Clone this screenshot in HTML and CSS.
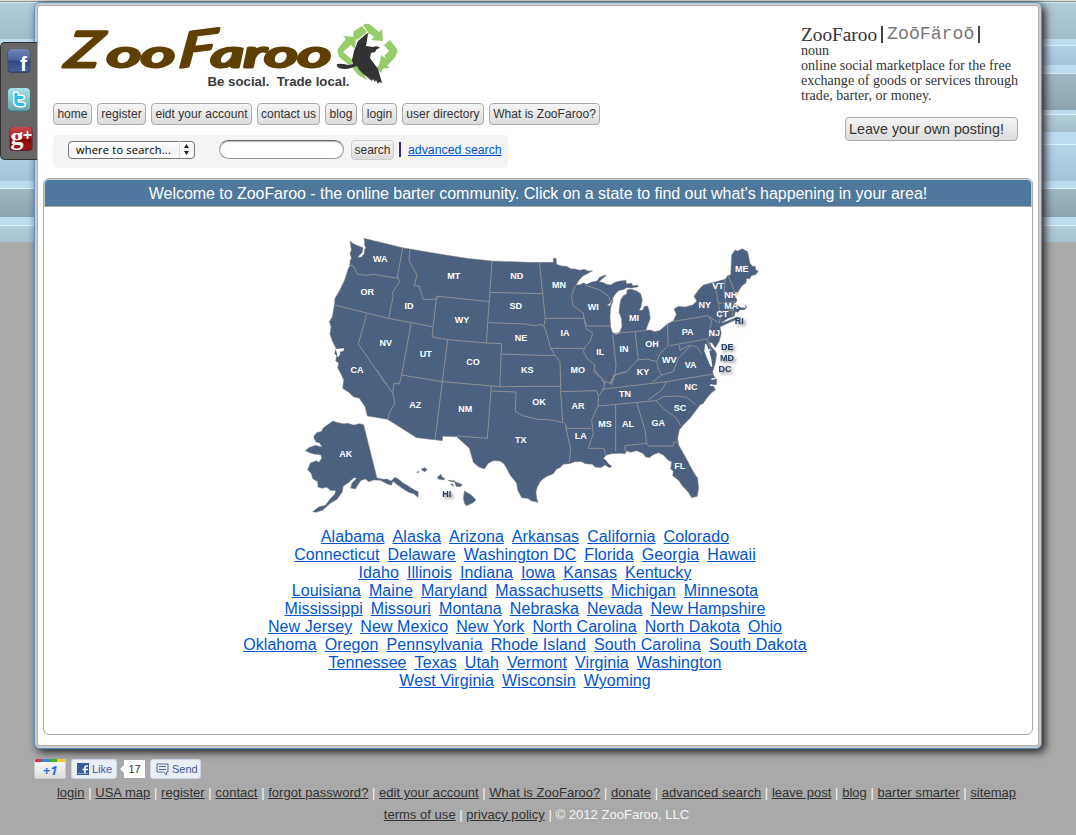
FILE: index.html
```html
<!DOCTYPE html>
<html lang="en">
<head>
<meta charset="utf-8">
<title>ZooFaroo</title>
<link rel="stylesheet" href="styles.css">
</head>
<body>
<aside class="share">
  <svg class="share-icon" viewBox="0 0 24 26"><defs><linearGradient id="fb" x2="0" y2="1"><stop offset="0" stop-color="#7786b4"/><stop offset=".5" stop-color="#4a619c"/><stop offset=".52" stop-color="#31497f"/><stop offset="1" stop-color="#465f98"/></linearGradient></defs><rect x=".5" y="1" width="23" height="24" rx="4" fill="#39466b"/><rect x="1" y="1" width="22" height="22.5" rx="4" fill="url(#fb)"/><text x="13" y="23" font-family="Liberation Sans" font-weight="700" font-size="21" fill="#fff">f</text></svg>
  <svg class="share-icon" viewBox="0 0 24 26"><defs><linearGradient id="tw" x2="0" y2="1"><stop offset="0" stop-color="#a6e3e6"/><stop offset="1" stop-color="#68a6ac"/></linearGradient></defs><rect x=".5" y="1" width="23" height="24" rx="4" fill="#417579"/><rect x="1" y="1" width="22" height="22.5" rx="4" fill="url(#tw)"/><path d="M9 7v7q0 3.500 3.500 3.500H16M9 10.500h6" fill="none" stroke="#fff" stroke-width="6" stroke-linecap="round"/><path d="M9 7v7q0 3.500 3.500 3.500H16M9 10.500h6" fill="none" stroke="#2cbde8" stroke-width="3.200" stroke-linecap="round"/></svg>
  <svg class="share-icon google" viewBox="0 0 24 26"><defs><linearGradient id="gp" x2="0" y2="1"><stop offset="0" stop-color="#c9484b"/><stop offset=".5" stop-color="#a81e22"/><stop offset=".52" stop-color="#860608"/><stop offset="1" stop-color="#a01519"/></linearGradient></defs><rect x=".5" y="1" width="23" height="24" rx="4" fill="#5f2022"/><rect x="1" y="1" width="22" height="22.5" rx="4" fill="url(#gp)"/><text x="1.500" y="18.500" font-family="Liberation Serif" font-weight="700" font-size="26" fill="#fff">g</text><path d="M18.500 5v8M14.500 9h8" stroke="#fff" stroke-width="1.800"/></svg>
</aside>

<main class="panel">
  <header class="top">
    <div class="top-left">
      <svg class="logo" viewBox="53 17 352 78" role="img" aria-label="ZooFaroo">
        <g class="wordmark">
          <text transform="translate(64 67) skewX(-12)" font-size="49" textLength="34" lengthAdjust="spacingAndGlyphs">Z</text>
          <text x="107" y="67" font-size="36" textLength="68" lengthAdjust="spacingAndGlyphs">oo</text>
          <text transform="translate(178 67.500) rotate(-7) skewX(-13)" font-size="47" textLength="36" lengthAdjust="spacingAndGlyphs">F</text>
          <text x="211" y="67" font-size="36" textLength="120" lengthAdjust="spacingAndGlyphs">aroo</text>
        </g>
        <g fill="#97cd68">
          <path d="M354 31l8-5 5 6-10 8-4-4z"/><path d="M363 25q5-3 9 1l7 6 3-3 1 12-12-1 3-3-7-6z"/>
          <path d="M340 46l6-7-3-3 13 1-1 12-4-4-7 6q-3 3 1 6l-5-1q-5-5 0-10z"/>
          <path d="M338 56l5-4 12 10-6 3z"/><path d="M384 45l6-5 7 9q1 4-2 8l-4 4-7-5 5-5z"/>
          <path d="M379 66l2-11 4 3 7-7 4 5-9 10 3 2-11 1zM351 66l8-2 8 16-9-5z"/><path d="M376 68l4-4 3 4-2 5z"/>
        </g>
        <path fill="#333" d="M371 32l-5 2-8 7-4 10-2 9 1 4-5 1q-7-2-11-1-1 2 2 4 6 2 12 0l6-2q2 5 9 10l6 5 1-2 2 3 1-2 2 4 1-2 3 1-4-14-8-11 1-5 4-1 2-3 3-1q-2-3-7-1l-7-1 2-12z"/>
        <text class="tagline" x="207.500" y="85.500" textLength="142" lengthAdjust="spacingAndGlyphs" xml:space="preserve">Be social.  Trade local.</text>
      </svg>
      <nav class="nav">
        <a class="btn home">home</a><a class="btn register">register</a><a class="btn account">eidt your account</a><a class="btn contact">contact us</a><a class="btn blog">blog</a><a class="btn login">login</a><a class="btn users">user directory</a><a class="btn what">What is ZooFaroo?</a>
      </nav>
      <form class="search">
        <div class="select"><span>where to search...</span><svg width="15" height="17" viewBox="0 0 15 17"><path d="M.5 0v17" stroke="#ddd"/><path d="M5 7l2.500-4L10 7zM5 10l2.500 4 2.500-4z" fill="#222"/></svg></div>
        <input class="query" type="text" aria-label="search">
        <a class="btn go">search</a>
        <i class="bar"></i>
        <a class="advanced">advanced search</a>
      </form>
    </div>
    <div class="definition">
      <p class="term">ZooFaroo<span class="rule"></span><span class="phonetic">ZoōFäroō</span><span class="rule"></span></p>
      <p>noun</p>
      <p>online social marketplace for the free<br>exchange of goods or services through<br>trade, barter, or money.</p>
      <a class="btn post">Leave your own posting!</a>
    </div>
  </header>

  <section class="content">
    <h1>Welcome to ZooFaroo - the online barter community. Click on a state to find out what's happening in your area!</h1>
    <svg class="map" viewBox="0 0 1410 885">
      <g class="land">
        <path d="M150 48L158 55 168 60 189 68 187 82 177 92 174 97 184 96 192 87 194 73 197 68 193 58 194 48 192 40 308 68 400 84 500 100 576 108 690 112H760V100H768L770 118 785 123 800 124 812 131 825 132 840 136 852 133 865 138 878 137 866 144 850 152 838 164 828 180 840 179 850 174 860 178 875 171 890 168 899 157 915 150 918 152 905 163 897 170 908 172 920 178 932 180 945 172 960 168 978 166 979 176 995 175 998 182 1012 180 1015 185 995 189 980 188 970 194 958 196 948 205 940 217 930 235 922 240 930 243 936 225 940 222 932 250 930 275 932 305 937 322 948 329 958 324 966 305 964 280 957 262 959 240 963 223 970 212 980 207 981 195 993 192 1010 198 1022 206 1027 225 1023 245 1018 256 1027 256 1034 244 1043 243 1047 255 1051 280 1044 298 1038 316 1050 315 1065 320 1080 316 1102 297 1120 287 1129 268 1122 252 1135 244 1155 246 1178 240 1190 228 1182 214 1195 195 1210 180 1275 163 1283 152 1292 149 1295 90 1305 75 1313 78 1327 71 1343 80 1350 115 1358 124 1366 124 1367 134 1375 138 1368 148 1355 152 1348 162 1340 160 1338 174 1326 182 1318 195 1312 204 1308 215 1311 228 1305 234 1312 242 1324 248 1338 248 1335 240 1341 247 1332 255 1320 254 1314 262 1306 260 1303 274 1285 280 1268 290 1262 294 1280 289 1310 276 1323 278 1290 292 1260 306 1264 325 1258 348 1246 369 1237 355 1228 352 1234 365 1246 378 1250 388 1246 415 1238 440 1242 454 1250 460 1250 478 1241 482 1246 495 1236 502 1220 520 1210 535 1200 540 1185 560 1170 580 1150 600 1138 615 1133 640 1136 660 1150 685 1165 712 1170 722 1181 742 1193 760 1196 790 1192 814 1175 818 1165 802 1145 780 1135 765 1118 752 1120 739 1112 732 1115 710 1104 705 1090 690 1075 683 1060 689 1048 698 1037 696 1030 686 1010 677 992 682 980 678 975 686 960 685 935 686 920 690 910 700 918 706 925 716 936 724 928 728 915 720 902 728 885 726 877 718 855 716 845 710 825 710 808 716 790 718 780 728 770 732 760 746 738 755 722 768 712 785 708 800 710 820 714 832 695 828 682 820 665 818 653 795 650 775 630 750 620 730 612 717 600 708 580 707 565 715 553 732 535 725 520 712 508 670 470 635 428 634 427 647 350 638 262 583 202 573 195 545 178 520 160 515 148 503 128 490 131 465 122 445 113 428 116 415 107 407 110 392 104 386 108 370 98 350 90 328 93 305 88 290 97 275 103 240 105 220 118 198 134 165 145 130 150 122 150 108 154 100 150 85 154 75z"/>
        <path d="M42 633l8-10 15-4 4-10 20-14 10-7 10 4 20 4 15-1 17 5 18-4 12 3 40 160 20 4 10-1 12 6 12-11 10 5 15 13 14 7 19 13 12 5-1 17-13-11-15-4-15-9-22-16-10-8-5 12-12-4-21-11-20-1-15 5-10-8-14 5-8 12-8 13-14-3 4-15 14-14-8-2-17 15-15 10-3 18-16 22-20 12-24 21-19 6-10-2 18-14 20-5 15-20 14-15 2-9-16-1-11-9-14 3-12-4-1-16-15-9-4-15-11-12 8-20 18-7 8 5 8-12-2-10-22-3-12-4-13-6 10-9 20-7 20 5-7-12-11-3-6-12z"/>
        <path d="M350 742l6-4-1 5zM363 733l10-5 9 5-8 8zM413 755l10-7 3 8 9 5-4 4-17-3zM445 766l20 1-5 4-14-3zM452 777l7 1 2 6-8-4zM463 769l10 4 14 6-5 6-14-1zM493 798l22 13 13 14-10 9-18 8-6-5-4-17z"/>
      </g>
      <path class="water" d="M108 374l22-2-2 5-12 1 3 8-6 9M1217 357l9 22 6 24 3 22-6-12-8-20-6-14zM1230 372l-4 8M1252 458l-18 5M1246 482l-16-2"/>
      <g class="borders">
        <path d="M147 118L160 123 172 147 198 151 223 148 248 153 296 160M308 68L292 156 300 168 276 205 280 212 266 280M103 240L265 280 397 305M200 267L175 357 260 480M330 72L327 107 351 150 343 182 358 184 370 224 410 222 414 212M410 212L396 336M414 214L569 230M576 108L559 354M396 336L443 344 559 354 605 356M333 296L305 450M443 344L427 470 405 645M230 435L278 505 285 533 268 565 264 583M278 505L282 475 298 477 305 450 427 470 600 485M605 356L599 485M571 202L720 206M566 293L680 297 700 302 720 299M605 387L720 391M600 485L720 484M574 485L562 640 470 633M574 498L648 501 646 560 668 572 700 580 720 584"/>
        <path transform="translate(690)" d="M28 112L38 205 46 280 42 300M28 205H40M46 280H162M28 298L42 303 50 325 60 365 75 392M62 370H160M28 391H75L90 410 92 480M162 280L168 310 188 325 180 350 165 365 160 380 175 405 195 420 192 440 215 460 225 480M135 182L125 210 128 240 160 265 162 280 170 303H240M248 328L258 420 255 450 245 480M252 325L315 320 348 316M315 320L325 405M238 478L252 450 290 440 322 405 350 402 380 410 390 385 415 362 412 297M425 290L535 272 545 290 540 310 552 335M420 362L530 342 545 330M380 410L385 432 395 450 430 440 445 400 465 380 480 362 500 365 515 385M448 360L450 375 480 360M165 180L210 195 236 214 240 228M555 180L565 235 572 270 568 293M565 235L617 230M568 262L612 255M608 255V275M585 162L583 200 588 232M594 150L615 203M535 274L568 294M530 342L545 378"/>
        <path transform="translate(690 435)" d="M28 49H92M92 0V65L98 155 108 165V175H183M92 65L200 62 205 78M108 175L122 235 118 275M192 0L225 35 220 58 205 80 205 105 185 150 190 190 175 235H222L228 258M225 35L245 40 250 17 288 5M215 58L410 35 550 12M205 108L378 92M257 103V245M320 98L345 180 350 222M285 244V227L350 220 355 228 430 228 432 215 443 218M378 92L400 115 440 145 452 168M378 92L400 80 440 78 470 82 500 106M410 35L395 60 355 90M365 38L395 15M30 149L45 148 75 152 98 158"/>
      </g>
      <g class="codes">
        <text x="241" y="112">WA</text><text x="202" y="209">OR</text><text x="327" y="253">ID</text><text x="461" y="163">MT</text><text x="650" y="163">ND</text><text x="647" y="253">SD</text><text x="486" y="295">WY</text><text x="663" y="347">NE</text><text x="257" y="363">NV</text><text x="377" y="397">UT</text><text x="519" y="421">CO</text><text x="682" y="443">KS</text><text x="171" y="443">CA</text><text x="346" y="550">AZ</text><text x="496" y="561">NM</text><text x="662" y="653">TX</text><text x="137" y="695">AK</text><text x="717" y="539">OK</text><text x="777" y="189">MN</text><text x="880" y="254">WI</text><text x="795" y="332">IA</text><text x="1002" y="289">MI</text><text x="901" y="391">IL</text><text x="972" y="382">IN</text><text x="1056" y="365">OH</text><text x="1163" y="331">PA</text><text x="1108" y="415">WV</text><text x="1172" y="430">VA</text><text x="1029" y="450">KY</text><text x="833" y="443">MO</text><text x="834" y="551">AR</text><text x="975" y="517">TN</text><text x="1173" y="494">NC</text><text x="1140" y="558">SC</text><text x="915" y="607">MS</text><text x="984" y="605">AL</text><text x="1075" y="603">GA</text><text x="842" y="642">LA</text><text x="1139" y="733">FL</text><text x="1214" y="250">NY</text><text x="1325" y="140">ME</text><text x="1254" y="192">VT</text><text x="1292" y="220">NH</text><text x="1294" y="252">MA</text><text x="1267" y="277">CT</text><text x="1243" y="333">NJ</text>
      </g>
      <g class="codes offshore">
        <text x="1318" y="297">RI</text><text x="1282" y="374">DE</text><text x="1281" y="408">MD</text><text x="1275" y="442">DC</text><text x="440" y="817">HI</text>
      </g>
    </svg>
    <div class="states">
      <div><a>Alabama</a><a>Alaska</a><a>Arizona</a><a>Arkansas</a><a>California</a><a>Colorado</a></div>
      <div><a>Connecticut</a><a>Delaware</a><a>Washington DC</a><a>Florida</a><a>Georgia</a><a>Hawaii</a></div>
      <div><a>Idaho</a><a>Illinois</a><a>Indiana</a><a>Iowa</a><a>Kansas</a><a>Kentucky</a></div>
      <div><a>Louisiana</a><a>Maine</a><a>Maryland</a><a>Massachusetts</a><a>Michigan</a><a>Minnesota</a></div>
      <div><a>Mississippi</a><a>Missouri</a><a>Montana</a><a>Nebraska</a><a>Nevada</a><a>New Hampshire</a></div>
      <div><a>New Jersey</a><a>New Mexico</a><a>New York</a><a>North Carolina</a><a>North Dakota</a><a>Ohio</a></div>
      <div><a>Oklahoma</a><a>Oregon</a><a>Pennsylvania</a><a>Rhode Island</a><a>South Carolina</a><a>South Dakota</a></div>
      <div><a>Tennessee</a><a>Texas</a><a>Utah</a><a>Vermont</a><a>Virginia</a><a>Washington</a></div>
      <div><a>West Virginia</a><a>Wisconsin</a><a>Wyoming</a></div>
    </div>
  </section>
</main>

<footer>
  <div class="social">
    <div class="plus"><i></i><b>+1</b></div>
    <div class="fb"><svg width="12" height="12" viewBox="0 0 12 12"><path fill="#3b5998" d="M0 0h12v12H0z"/><path d="M11 3H9.500Q8 3 8 5v6M5.500 6.500H11" stroke="#fff" stroke-width="1.700" fill="none"/><path d="M1 10.500h10" stroke="#8fa1c8"/></svg>Like</div>
    <div class="count">17</div>
    <div class="fb send"><svg width="13" height="13" viewBox="0 0 13 13" fill="none" stroke="#4f6aa3"><path d="M1 1h11v8h-1.500v3L7.500 9H1zM3 3.500h7M3 6.500h7"/></svg>Send</div>
  </div>
  <p class="links"><a>login</a> | <a>USA map</a> | <a>register</a> | <a>contact</a> | <a>forgot password?</a> | <a>edit your account</a> | <a>What is ZooFaroo?</a> | <a>donate</a> | <a>advanced search</a> | <a>leave post</a> | <a>blog</a> | <a>barter smarter</a> | <a>sitemap</a></p>
  <p class="links"><a>terms of use</a> | <a>privacy policy</a> | © 2012 ZooFaroo, LLC</p>
</footer>
</body>
</html>
```
FILE: styles.css
```css
* { box-sizing: border-box; }
body {
  margin: 0;
  padding-top: 2px;
  height: 835px;
  overflow: hidden;
  font-family: "Liberation Sans", Arial, sans-serif;
  color: #333;
  background: #a9a9a9 linear-gradient(
    #deded8 0 1px, #8c9494 1px 2px, #d5eaf2 2px 3px, #b3ced8 3px, #a2bdc8 39px,
    #bcdcee 39px 45px, #daf0fa 45px 46px, #b2d0e4 46px, #a5c5d9 65px,
    #bcdcee 65px 73px, #daf0fa 73px 74px, #a0b7c2 74px, #8da4af 110px,
    #bcdcee 110px 114px, #daf0fa 114px 115px, #b3ced8 115px, #a2bdc8 132px,
    #bcdcee 132px 144px, #daf0fa 144px 145px, #b5d4e8 145px, #a5c5d9 181px,
    #bcdcee 181px 188px, #daf0fa 188px 189px, #a0b7c2 189px, #8da4af 217px,
    #bcdcee 217px 225px, #daf0fa 225px 226px, #b3ced8 226px, #a4c2cf 242px) 0 0 / 100% 242px no-repeat;
}
p, h1 { margin: 0; font-weight: 400; }

.share {
  position: absolute;
  left: 0;
  top: 42px;
  width: 37px;
  height: 118px;
  display: flex;
  flex-direction: column;
  gap: 13px;
  padding: 5px 0 0 6px;
  background: #666;
  border: 1px solid #333;
  border-right: 0;
  border-radius: 5px 0 0 5px;
  z-index: 2;
}
.share-icon { width: 24px; height: 26px; flex: none; overflow: visible; }
.google { margin-left: 2px; }

.panel {
  width: 1008px;
  height: 747px;
  margin-left: 34px;
  padding: 11px 5px 0;
  background: #fff;
  border: 1px solid #5a93c8;
  border-radius: 6px;
  box-shadow: inset 0 0 0 2px #cbcbcb, inset 0 0 0 3px #b0b0b0, 3px 3px 8px #222;
}
.top { display: flex; justify-content: space-between; height: 164px; padding: 3px 18px 0 13px; }
.logo { display: block; width: 352px; height: 78px; overflow: visible; }
.wordmark text {
  font-family: Lato, sans-serif;
  font-style: italic;
  font-weight: 400;
  fill: #5f4002;
  stroke: #5f4002;
  stroke-width: 3px;
  stroke-linejoin: round;
}
.tagline { font: 700 12.500px "Liberation Sans", Arial, sans-serif; fill: #3b3b3b; }

.btn {
  display: flex;
  align-items: center;
  justify-content: center;
  height: 22px;
  font-size: 12px;
  color: #333;
  white-space: nowrap;
  background: linear-gradient(#f5f5f5, #dcdcdc);
  border: 1px solid #aaa;
  border-radius: 4px;
}
.nav { display: flex; gap: 5px; margin-top: 8px; letter-spacing: .04px; }
.home { width: 39px; }
.register { width: 49px; }
.account { width: 101px; }
.contact { width: 63px; }
.blog { width: 32px; }
.login { width: 35px; }
.users { width: 82px; }
.what { width: 111px; }

.search {
  display: flex;
  align-items: center;
  width: 455px;
  height: 33px;
  margin-top: 10px;
  padding: 0 0 4px 15px;
  background: #f4f4f4;
  border-radius: 5px;
}
.select {
  display: flex;
  align-items: center;
  justify-content: space-between;
  width: 127px;
  height: 18px;
  padding-left: 7px;
  font: 500 11px "Open Sans", sans-serif;
  color: #000;
  letter-spacing: .22px;
  background: linear-gradient(#fff, #f2f2f2 50%, #fff);
  border: 1px solid #777;
  border-radius: 4px;
  white-space: nowrap;
}
.query {
  width: 125px;
  height: 19px;
  margin: 0 7px 0 24px;
  background: #fff;
  border: 1px solid #999;
  border-top-color: #666;
  border-radius: 10px;
  box-shadow: inset 0 1px 1px #bbb;
}
.go { width: 43px; height: 20px; border-color: #ccc; }
.bar { width: 2px; height: 15px; margin: 0 7px 0 5px; background: #2e2e80; }
.advanced { font-size: 12.300px; color: #05c; text-decoration: underline; white-space: nowrap; }

.definition {
  width: 217px;
  padding-top: 8px;
  font: 14.080px/15px "Liberation Serif", serif;
  white-space: nowrap;
}
.term { display: flex; align-items: center; height: 18px; font-size: 19.300px; }
.rule { width: 2px; height: 17px; margin: 0 4px; background: #444; }
.phonetic { font: 18.200px "Liberation Mono", monospace; color: #777; }
.post {
  width: 173px;
  height: 24px;
  margin: 14px 0 0 auto;
  padding-left: 3px;
  justify-content: flex-start;
  font-family: "Liberation Sans", Arial, sans-serif;
  font-size: 14.300px;
}

.content {
  width: 990px;
  height: 557px;
  margin: 0 0 0 3px;
  border: 1px solid #aaa;
  border-radius: 6px;
  background: #fff;
}
h1 {
  height: 28px;
  font-size: 16px;
  line-height: 28px;
  letter-spacing: -.045px;
  text-align: center;
  white-space: nowrap;
  color: #fff;
  background: #4f789d;
  border: 1px solid #c4cdd5;
  border-bottom-color: #aaa;
  border-radius: 5px 5px 0 0;
}
.map { display: block; width: 470px; height: 295px; margin: 18px 0 0 256px; }
.land { fill: #4c617f; stroke: #8a8680; stroke-width: 1.500px; stroke-linejoin: round; }
.borders { fill: none; stroke: #8d8f91; stroke-width: 3px; stroke-linejoin: round; }
.water { fill: #fff; stroke: #fff; stroke-width: 4px; }
.codes { font: 700 27px "Liberation Sans", Arial, sans-serif; fill: #fff; text-anchor: middle; }
.offshore { fill: #203b60; filter: drop-shadow(6px 6px 4px #777); }
.states { width: 962px; padding-top: 8px; font-size: 16px; line-height: 18px; letter-spacing: .08px; }
.states div { display: flex; justify-content: center; gap: 8px; white-space: nowrap; }
.states a { color: #05c; text-decoration: underline; }

footer { padding-left: 34px; }
.social { display: flex; align-items: flex-start; height: 33px; padding-top: 10px; }
.plus {
  width: 32px;
  height: 20px;
  text-align: center;
  background: linear-gradient(#fff, #ddd);
  border: 1px solid #c9c9c9;
  border-top: 0;
  border-radius: 2px;
  overflow: hidden;
}
.plus i { display: block; height: 3px; background: linear-gradient(90deg, #dd3040 25%, #3089df 25% 50%, #42b52f 50% 75%, #fbc42c 75%); }
.plus b { display: block; font: italic 700 13px/16px "Open Sans", sans-serif; color: #2a6be0; }
.fb {
  display: flex;
  align-items: center;
  gap: 3px;
  width: 46px;
  height: 20px;
  margin-left: 5px;
  padding-left: 5px;
  font-size: 11px;
  color: #3b5998;
  background: #eceef5;
  border: 1px solid #cad4e7;
  border-radius: 3px;
}
.count {
  width: 21px;
  height: 18px;
  margin: 1px 0 0 7px;
  font-size: 11px;
  line-height: 18px;
  text-align: center;
  color: #333;
  background: #fff;
  position: relative;
}
.count::before {
  content: "";
  position: absolute;
  left: -4px;
  top: 5px;
  border: 4px solid transparent;
  border-left: 0;
  border-right-color: #fff;
}
.send { width: 51px; }
.links { width: 1005px; font-size: 13px; line-height: 22px; letter-spacing: .03px; text-align: center; white-space: nowrap; color: #f5f5f5; }
.links a { color: #333; text-decoration: underline; }
```
